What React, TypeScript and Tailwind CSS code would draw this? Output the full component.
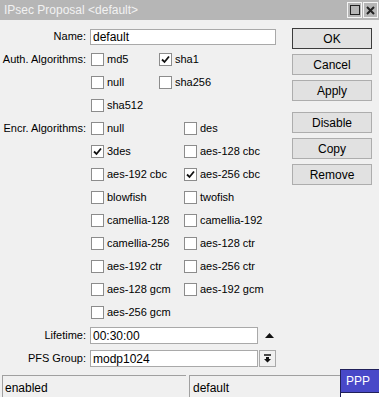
import React from "react";

type Cb = { label: string; checked?: boolean };

function Check({ checked }: { checked?: boolean }) {
  return (
    <span className="w-[13px] h-[13px] border border-[#8c8c8c] bg-white flex items-center justify-center shrink-0">
      {checked && (
        <svg width="9" height="9" viewBox="0 0 9 9">
          <path d="M1 4.5 L3.5 7 L8 1.5" stroke="#111" strokeWidth="1.8" fill="none" />
        </svg>
      )}
    </span>
  );
}

function CbItem({ item, width }: { item?: Cb; width: string }) {
  return (
    <div className={`flex items-center gap-[3px] ${width}`}>
      {item && (
        <>
          <Check checked={item.checked} />
          <span>{item.label}</span>
        </>
      )}
    </div>
  );
}

const auth: [Cb, Cb?][] = [
  [{ label: "md5" }, { label: "sha1", checked: true }],
  [{ label: "null" }, { label: "sha256" }],
  [{ label: "sha512" }],
];

const encr: [Cb, Cb?][] = [
  [{ label: "null" }, { label: "des" }],
  [{ label: "3des", checked: true }, { label: "aes-128 cbc" }],
  [{ label: "aes-192 cbc" }, { label: "aes-256 cbc", checked: true }],
  [{ label: "blowfish" }, { label: "twofish" }],
  [{ label: "camellia-128" }, { label: "camellia-192" }],
  [{ label: "camellia-256" }, { label: "aes-128 ctr" }],
  [{ label: "aes-192 ctr" }, { label: "aes-256 ctr" }],
  [{ label: "aes-128 gcm" }, { label: "aes-192 gcm" }],
  [{ label: "aes-256 gcm" }],
];

function Row({ label, children }: { label?: string; children: React.ReactNode }) {
  return (
    <div className="flex items-center h-[23px]">
      <div className="w-[90px] pr-[4px] text-right shrink-0">{label}</div>
      <div className="flex items-center flex-1">{children}</div>
    </div>
  );
}

function Btn({ children, primary }: { children: React.ReactNode; primary?: boolean }) {
  return (
    <div
      className={`w-[80px] h-[21px] flex items-center justify-center bg-[#e1e1e1] text-[12px] ${
        primary ? "border border-[#3c3c3c]" : "border border-[#adadad]"
      }`}
    >
      {children}
    </div>
  );
}

export default function App() {
  return (
    <div className="w-[379px] h-[397px] bg-[#f0f0f0] text-[11px] text-black font-['Liberation_Sans',Arial,sans-serif] flex flex-col relative overflow-hidden">
      {/* title bar */}
      <div className="h-[20px] bg-[#b6b6b6] flex items-center justify-between pl-[4px] pr-[1px] shrink-0">
        <span className="text-[12px] text-[#f2f2f2]">IPsec Proposal &lt;default&gt;</span>
        <div className="flex gap-[1px]">
          <div className="w-[15px] h-[16px] border border-[#f5f5f5] bg-[#b6b6b6] flex items-center justify-center">
            <div className="w-[10px] h-[10px] border-[1.5px] border-[#222]" />
          </div>
          <div className="w-[15px] h-[16px] border border-[#f5f5f5] bg-[#b6b6b6] flex items-center justify-center">
            <svg width="9" height="9" viewBox="0 0 9 9">
              <path d="M1 1 L8 8 M8 1 L1 8" stroke="#222" strokeWidth="2" />
            </svg>
          </div>
        </div>
      </div>

      <div className="flex h-[350px] pt-[5px]">
        <div className="w-[282px] flex flex-col">
          <Row label="Name:">
            <div className="w-[186px] h-[16px] bg-white border border-[#a9a9a9] flex items-center pl-[2px] text-[12px]">
              default
            </div>
          </Row>
          {auth.map(([a, b], i) => (
            <Row key={"a" + i} label={i === 0 ? "Auth. Algorithms:" : undefined}>
              <div className="flex items-center pl-[1px]">
                <CbItem item={a} width="w-[68px]" />
                <CbItem item={b} width="w-[80px]" />
              </div>
            </Row>
          ))}
          {encr.map(([a, b], i) => (
            <Row key={"e" + i} label={i === 0 ? "Encr. Algorithms:" : undefined}>
              <div className="flex items-center pl-[1px]">
                <CbItem item={a} width="w-[93px]" />
                <CbItem item={b} width="w-[90px]" />
              </div>
            </Row>
          ))}
          <Row label="Lifetime:">
            <div className="w-[168px] h-[17px] bg-white border border-[#a9a9a9] flex items-center pl-[2px] text-[12px]">
              00:30:00
            </div>
            <svg className="ml-[7px]" width="9" height="5" viewBox="0 0 9 5">
              <path d="M0 5 L4.5 0 L9 5 Z" fill="#111" />
            </svg>
          </Row>
          <Row label="PFS Group:">
            <div className="w-[168px] h-[17px] bg-white border border-[#a9a9a9] flex items-center pl-[2px] text-[12px]">
              modp1024
            </div>
            <div className="ml-[1px] w-[17px] h-[17px] bg-[#f0f0f0] border border-[#a9a9a9] flex items-center justify-center">
              <svg width="9" height="9" viewBox="0 0 9 9">
                <path d="M1 1 H8" stroke="#111" strokeWidth="1.5" />
                <path d="M3 3 H6 V5 H8 L4.5 8.5 L1 5 H3 Z" fill="#111" />
              </svg>
            </div>
          </Row>
        </div>

        <div className="flex flex-col pl-[10px] pt-[3px] gap-[5px]">
          <Btn primary>OK</Btn>
          <Btn>Cancel</Btn>
          <Btn>Apply</Btn>
          <div className="h-[6px]" />
          <div className="-mt-[5px] flex flex-col gap-[5px]">
            <Btn>Disable</Btn>
            <Btn>Copy</Btn>
            <Btn>Remove</Btn>
          </div>
        </div>
      </div>

      {/* status bar */}
      <div className="flex-1 flex gap-[3px] pt-[5px] px-[2px]">
        <div className="w-[184px] border-t border-l border-[#a0a0a0] pl-[2px] pt-[3px] text-[12px]">enabled</div>
        <div className="flex-1 border-t border-l border-[#a0a0a0] pl-[3px] pt-[3px] text-[12px]">default</div>
      </div>

      <div className="absolute left-[340px] top-[369px] w-[40px] h-[24px] bg-[#4848c8] border border-[#20205a] text-white text-[12px] flex items-center pl-[5px]">
        PPP
      </div>
      <div className="absolute left-[340px] top-[393px] w-[40px] h-[4px] bg-white border-l border-[#20205a]" />
    </div>
  );
}
